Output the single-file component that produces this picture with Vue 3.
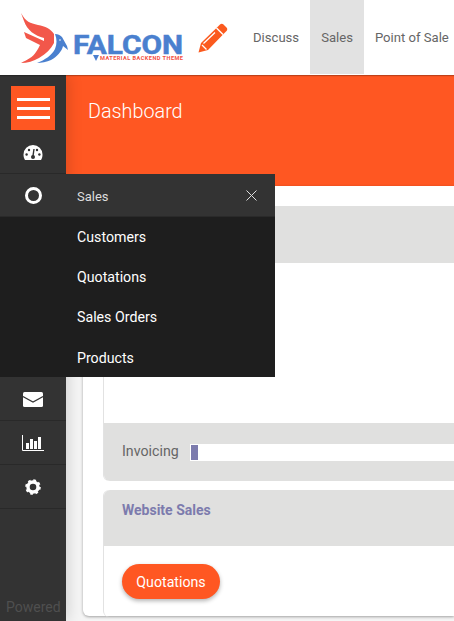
<template>
  <div class="page">
    <header class="topbar">
      <a class="logo">
        <svg width="170" height="56" viewBox="0 0 170 56">
          <!-- wing -->
          <path d="M0 1 C5 10 9 11 17 13 C24 14 30 17 33 22 L33 31 C30 37 25 42 18 46 C13 49 6 51 0 51 C6 48 12 45 15 40 C17 37 18 35 19 33 L5 26 L3 20 L23 29 L23 26 C14 24 6 18 3 9 Z" fill="#f2574a" />
          <!-- bird -->
          <path d="M34 22 C37 22 39 23 41 25 L46 34 L47 38 L42 34 C41 39 36 45 30 48 C26 50 20 51 16 51 C24 48 31 43 34 37 C36 32 36 27 34 22 Z" fill="#4a80cf" />
          <circle cx="39" cy="28" r="0.8" fill="#fff" />
          <text x="52" y="41.5" class="brand" textLength="110" lengthAdjust="spacingAndGlyphs">FALCON</text>
          <path d="M72 43 L78 43 L75 49 Z" fill="#4a80cf" />
          <text x="79" y="48" class="tagline" textLength="83">MATERIAL BACKEND THEME</text>
        </svg>
      </a>
      <svg class="pencil" width="30" height="30" viewBox="0 0 30 30">
        <path d="M0.5 29.5 L3 20 L20 3.5 L22 1.5 C23 0.5 24.5 0.5 25.5 1.5 L28.5 4.5 C29.5 5.5 29.5 7 28.5 8 L26.5 10 L10 27 Z" fill="#fb5a1e" />
        <path d="M18.5 5 L25 11.5" stroke="#fff" stroke-width="1.4" fill="none" />
        <path d="M4 22 L8.5 26.5 M5.5 20.5 L17 9.5" stroke="#fff" stroke-width="1.3" fill="none" />
      </svg>
      <nav class="topnav">
        <a v-for="item in topItems" :key="item" class="topnav-item" :class="{ active: item === 'Sales' }">{{ item }}</a>
      </nav>
    </header>

    <div class="body">
      <aside class="sidebar">
        <div class="burger-wrap">
          <div class="burger"><span></span><span></span><span></span></div>
        </div>
        <div class="side-item nudge">
          <svg width="20" height="15" viewBox="0 0 20 15">
            <path d="M10 0 A9.5 9.5 0 0 0 0.5 9.5 C0.5 11.5 1 13.5 2 15 L18 15 C19 13.5 19.5 11.5 19.5 9.5 A9.5 9.5 0 0 0 10 0 Z" fill="#fff" />
            <circle cx="3.6" cy="9.5" r="1.2" fill="#333" /><circle cx="6" cy="5" r="1.2" fill="#333" />
            <circle cx="16.4" cy="9.5" r="1.2" fill="#333" /><circle cx="14" cy="5" r="1.2" fill="#333" />
            <path d="M11 4 L10 11" stroke="#333" stroke-width="1.4" /><circle cx="10" cy="12" r="2" fill="#333" />
          </svg>
        </div>
        <div class="side-spacer"></div>
        <div class="side-item nudge">
          <svg width="20" height="15" viewBox="0 0 20 15">
            <rect width="20" height="15" rx="1.5" fill="#fff" />
            <path d="M0 4.5 L10 10 L20 4.5" stroke="#333" stroke-width="1.1" fill="none" />
          </svg>
        </div>
        <div class="side-item">
          <svg width="22" height="16" viewBox="0 0 22 16">
            <path d="M0.5 0 V15.5 H22" stroke="#fff" fill="none" />
            <rect x="4" y="8" width="3" height="6" fill="#fff" /><rect x="8" y="4" width="3" height="10" fill="#fff" />
            <rect x="12" y="6" width="3" height="8" fill="#fff" /><rect x="16" y="2" width="3" height="12" fill="#fff" />
          </svg>
        </div>
        <div class="side-item">
          <svg width="16" height="16" viewBox="0 0 16 16">
            <circle cx="8" cy="8" r="5" fill="none" stroke="#fff" stroke-width="3.4" />
            <circle cx="8" cy="8" r="6.6" fill="none" stroke="#fff" stroke-width="2.4" stroke-dasharray="2.6 2.6" />
          </svg>
        </div>
        <div class="powered">Powered</div>
      </aside>

      <main class="main">
        <div class="banner"><h1>Dashboard</h1></div>
        <div class="sheet">
          <section class="panel first">
            <div class="panel-head"></div>
            <div class="panel-body"></div>
            <div class="panel-foot">
              <span class="foot-label">Invoicing</span>
              <div class="progress"><div class="progress-fill"></div></div>
            </div>
          </section>
          <section class="panel second">
            <div class="panel-head small"><b>Website Sales</b></div>
            <div class="panel-actions"><button class="btn">Quotations</button></div>
          </section>
        </div>
      </main>

      <div class="flyout">
        <div class="fly-head">
          <span class="fly-icon"></span>
          <span class="fly-title">Sales</span>
          <svg width="11" height="11" viewBox="0 0 11 11"><path d="M0.5 0.5 L10.5 10.5 M10.5 0.5 L0.5 10.5" stroke="#ddd" fill="none" /></svg>
        </div>
        <ul class="fly-list">
          <li v-for="link in flyLinks" :key="link">{{ link }}</li>
        </ul>
      </div>
    </div>
  </div>
</template>

<script setup>
const topItems = ["Discuss", "Sales", "Point of Sale"];
const flyLinks = ["Customers", "Quotations", "Sales Orders", "Products"];
</script>

<style>
html, body { margin: 0; overflow: hidden; }
</style>

<style scoped>
.page {
  width: 454px;
  height: 621px;
  overflow: hidden;
  font-family: Roboto, "Liberation Sans", sans-serif;
  font-size: 13px;
  color: #666;
  background: #f5f5f5;
}
.topbar {
  height: 75px;
  display: flex;
  background: #fff;
  position: relative;
  z-index: 3;
  box-shadow: 0 1px 1px rgba(0, 0, 0, 0.25);
}
.logo {
  width: 198px;
  flex: none;
  box-sizing: border-box;
  padding: 12px 0 0 21px;
}
.brand {
  font-size: 25px;
  font-weight: 700;
  fill: #4a80cf;
  stroke: #4a80cf;
  stroke-width: 0.5px;
}
.tagline {
  font-size: 5.6px;
  font-weight: 700;
  fill: #f4503f;
}
.pencil { flex: none; margin-top: 23px; }
.topnav { display: flex; margin-left: 14px; }
.topnav-item {
  display: flex;
  align-items: center;
  padding: 0 11px;
  white-space: nowrap;
  height: 74px;
  font-size: 13.1px;
}
.topnav-item.active { background: #e2e2e2; }
.body { position: relative; display: flex; height: 546px; }
.sidebar {
  width: 66px;
  flex: none;
  background: #333;
  display: flex;
  flex-direction: column;
  position: relative;
  box-shadow: 2px 0 14px rgba(0, 0, 0, 0.15);
  z-index: 1;
}
.burger-wrap { padding: 11px 0 0 11px; }
.burger {
  width: 44px;
  height: 44px;
  background: #ff5722;
  display: flex;
  flex-direction: column;
  justify-content: center;
  align-items: center;
  gap: 6px;
}
.burger span { width: 33px; height: 3px; background: #fff; }
.side-item {
  height: 43px;
  flex: none;
  display: flex;
  align-items: center;
  justify-content: center;
  border-bottom: 1px solid #292929;
}
.nudge svg { margin-top: 2px; }
.side-spacer { height: 203px; flex: none; }
.powered {
  position: absolute;
  bottom: 6px;
  left: 6px;
  font-size: 14px;
  color: #4f4f4f;
}
.main { flex: 1; min-width: 0; position: relative; }
.banner { height: 111px; background: #ff5722; box-sizing: border-box; padding: 25px 0 0 22px; }
.banner h1 { margin: 0; font-size: 19.8px; line-height: 24px; font-weight: 300; color: #fff; }
.sheet {
  margin-left: 17px;
  height: 430px;
  background: #fff;
  border-radius: 0 0 0 6px;
  box-shadow: 0 1px 3px rgba(0, 0, 0, 0.35);
  box-sizing: border-box;
  padding: 20px 0 0 20px;
}
.panel {
  border-left: 1px solid #e2e2e2;
  border-radius: 6px 0 0 6px;
}
.first { margin-bottom: 9px; }
.panel-head { height: 57px; background: #e0e0df; }
.panel-head.small { height: 56px; box-sizing: border-box; padding: 12px 18px; border-radius: 6px 0 0 0; font-size: 14px; color: #7c7bad; }
.panel-body { height: 160px; }
.panel-foot {
  height: 58px;
  background: #e0e0df;
  border-radius: 0 0 0 6px;
  display: flex;
  align-items: center;
  padding-left: 18px;
  font-size: 14.2px;
}
.foot-label { width: 68px; flex: none; padding-bottom: 2px; }
.progress { flex: 1; height: 17px; background: #fff; padding: 1px; box-sizing: border-box; }
.progress-fill { width: 7px; height: 15px; background: #7c7bad; }
.panel-actions { padding: 18px; }
.btn {
  width: 98px;
  height: 35px;
  border: 0;
  border-radius: 18px;
  background: #ff5722;
  color: #fff;
  font-family: inherit;
  font-size: 14.2px;
  padding: 0;
  box-shadow: 0 2px 4px rgba(0, 0, 0, 0.3);
}
.flyout {
  position: absolute;
  left: 0;
  top: 99px;
  width: 275px;
  height: 203px;
  overflow: hidden;
  z-index: 2;
  background: #1e1e1e;
}
.fly-head {
  height: 43px;
  background: #333;
  display: flex;
  align-items: center;
  color: #ddd;
  box-sizing: border-box;
  padding: 1px 18px 0 0;
  border-bottom: 1px solid #2a2a2a;
}
.fly-icon {
  width: 11px;
  height: 11px;
  border: 3px solid #fff;
  border-radius: 50%;
  margin-left: 25px;
}
.fly-title { margin-left: 35px; flex: 1; padding-top: 2px; }
.fly-list { list-style: none; margin: 0; padding: 0; color: #fff; font-size: 14.2px; }
.fly-list li { height: 40.2px; line-height: 40.2px; padding-left: 77px; }
</style>
